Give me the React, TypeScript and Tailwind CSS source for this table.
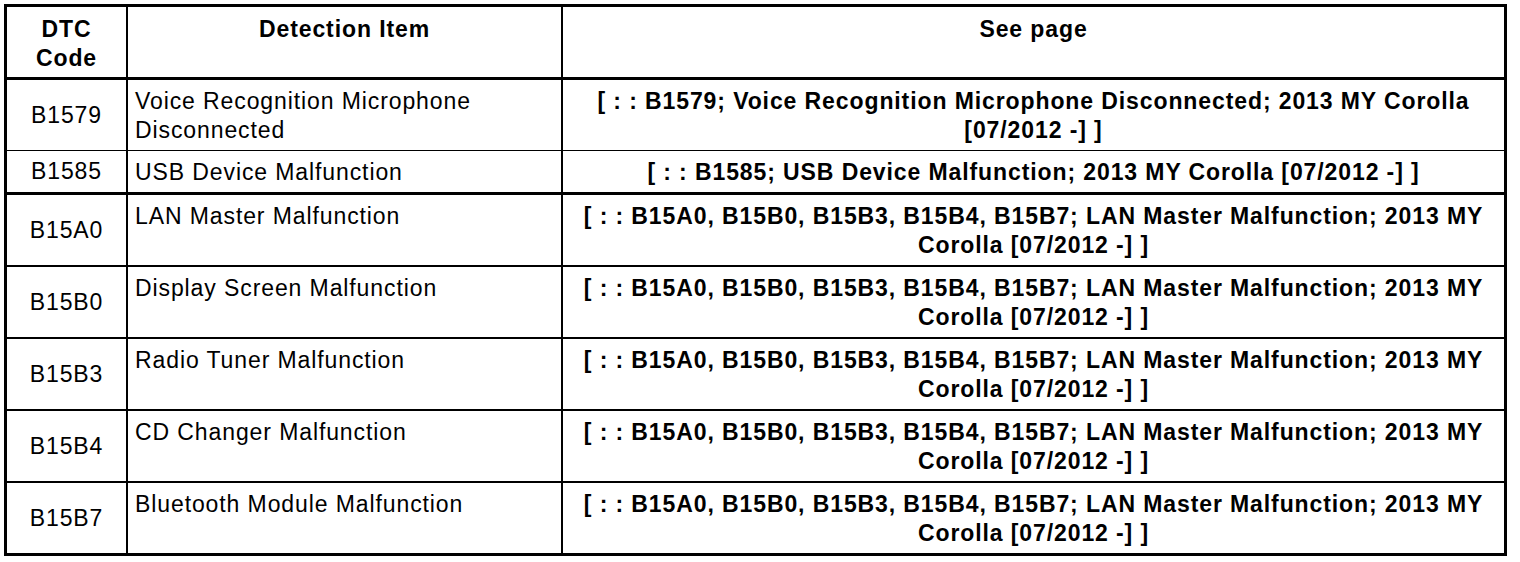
const rows = [
  {
    code: 'B1579',
    item: ['Voice Recognition Microphone', 'Disconnected'],
    page: ['[ : : B1579; Voice Recognition Microphone Disconnected; 2013 MY Corolla', '[07/2012 -] ]'],
    h: 'h-[71px]',
    line: 'border-b',
  },
  {
    code: 'B1585',
    item: ['USB Device Malfunction'],
    page: ['[ : : B1585; USB Device Malfunction; 2013 MY Corolla [07/2012 -] ]'],
    h: 'h-[44px]',
    line: 'border-b-[3px]',
  },
  { code: 'B15A0', item: ['LAN Master Malfunction'], h: 'h-[72px]', line: 'border-b-2' },
  { code: 'B15B0', item: ['Display Screen Malfunction'], h: 'h-[72px]', line: 'border-b-2' },
  { code: 'B15B3', item: ['Radio Tuner Malfunction'], h: 'h-[72px]', line: 'border-b-2' },
  { code: 'B15B4', item: ['CD Changer Malfunction'], h: 'h-[72px]', line: 'border-b-2' },
  { code: 'B15B7', item: ['Bluetooth Module Malfunction'], h: 'h-[70px]', line: '' },
];

const lanPage = [
  '[ : : B15A0, B15B0, B15B3, B15B4, B15B7; LAN Master Malfunction; 2013 MY',
  'Corolla [07/2012 -] ]',
];

export default function App() {
  return (
    <div className="min-h-[562px] bg-white pl-[4px] pt-[4px] text-black font-['Liberation_Sans',Arial,sans-serif] text-[23px] leading-[29px] tracking-[0.9px]">
      <div className="w-[1503px] border-[3px] border-black">
        {/* header */}
        <div className="flex h-[73px] border-b-[3px] border-black font-bold">
          <div className="w-[121px] shrink-0 border-r-2 border-black pt-[8px] text-center">
            DTC
            <br />
            Code
          </div>
          <div className="w-[435px] shrink-0 border-r-2 border-black pt-[8px] text-center">
            Detection Item
          </div>
          <div className="flex-1 pt-[8px] text-center">See page</div>
        </div>

        {rows.map((r) => {
          const page = r.page ?? lanPage;
          return (
            <div key={r.code} className={`flex ${r.h} ${r.line} border-black`}>
              <div className="flex w-[121px] shrink-0 items-center justify-center border-r-2 border-black">
                {r.code}
              </div>
              <div className="w-[435px] shrink-0 border-r-2 border-black pl-[7px] pt-[7px]">
                {r.item.map((t, i) => (
                  <div key={i}>{t}</div>
                ))}
              </div>
              <div className="flex-1 pt-[7px] text-center font-bold">
                {page.map((t, i) => (
                  <div key={i} className="whitespace-nowrap">
                    {t}
                  </div>
                ))}
              </div>
            </div>
          );
        })}
      </div>
    </div>
  );
}
